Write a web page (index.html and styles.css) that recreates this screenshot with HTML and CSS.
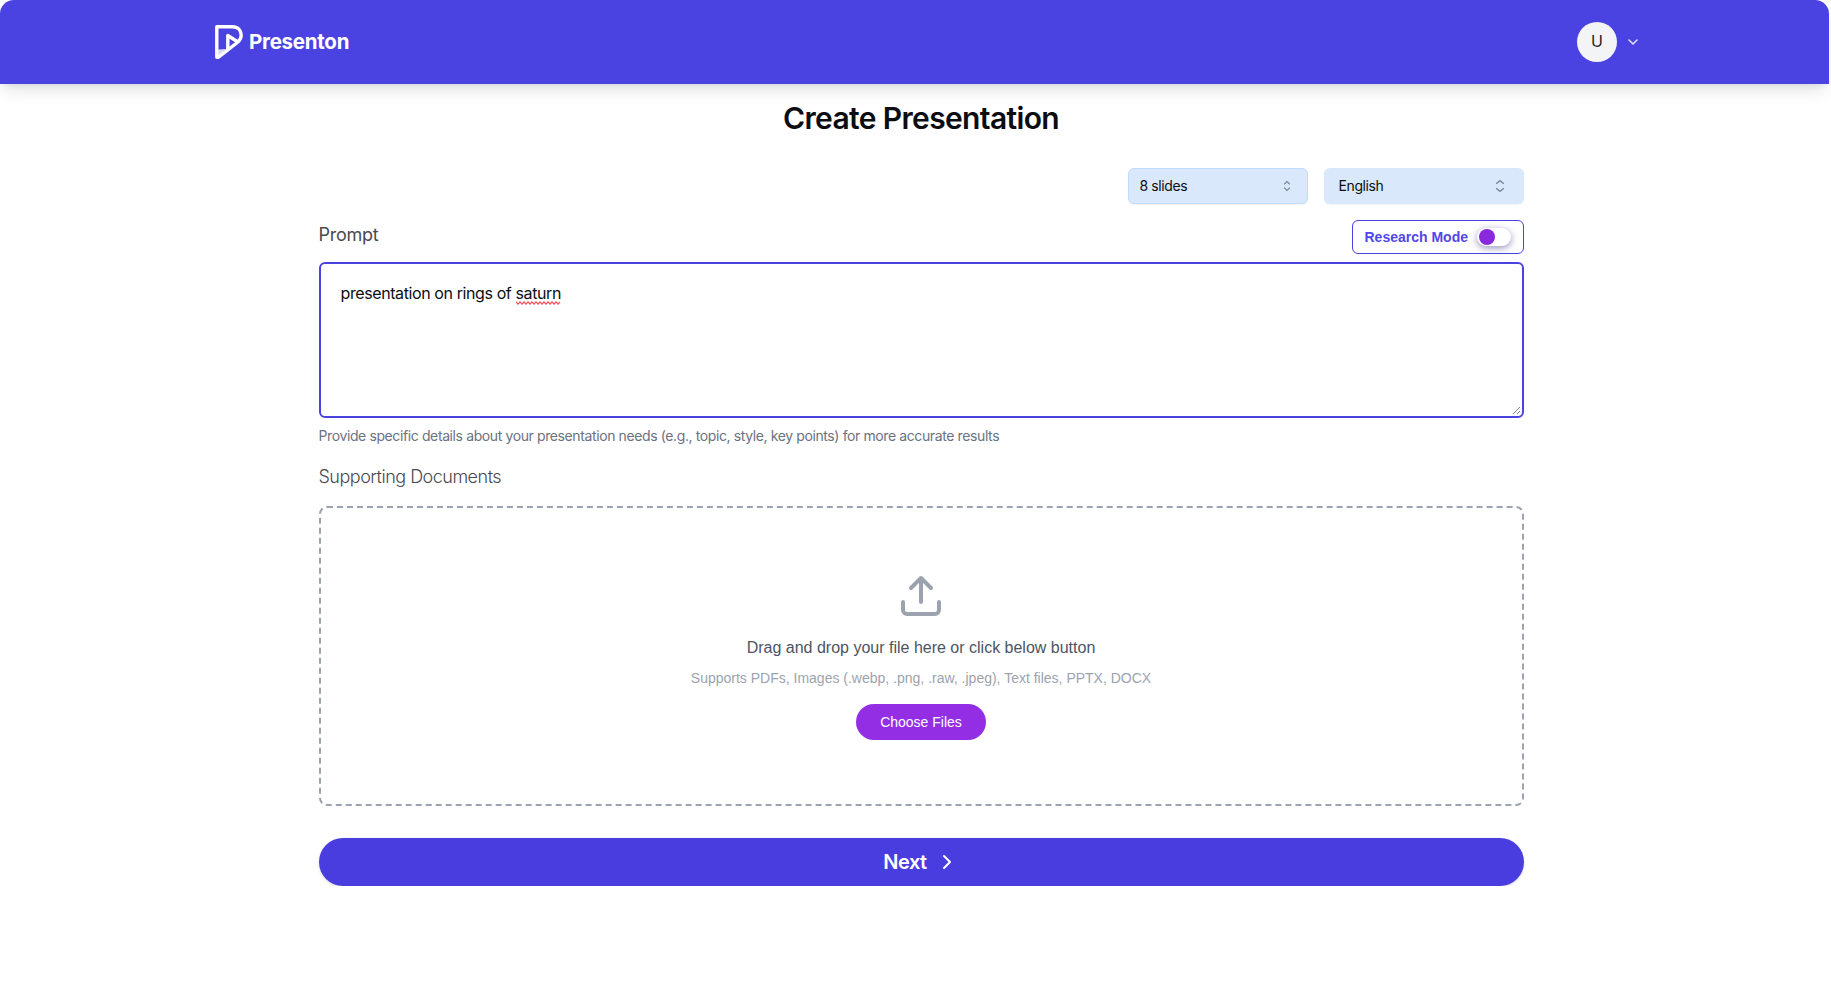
FILE: index.html
```html
<!DOCTYPE html>
<html lang="en">
<head>
<meta charset="utf-8">
<title>Presenton</title>
<link rel="stylesheet" href="styles.css">
</head>
<body>
<header class="header">
  <div class="brand">
    <svg class="logo" width="28" height="34" viewBox="0 0 28 34" fill="none" stroke="#fff" stroke-width="3.4" stroke-linejoin="round"><path d="M3 24.5 11.5 24 3 31Z" fill="#d9d7f8" stroke="none"/><path d="M1.8 1.8H17.5C23 1.8 26.2 5.6 26.2 10.3C26.2 13 25 15 23 17L3.5 32.2H1.8Z"/><path d="M12.8 24V10.5L22.5 16.8"/></svg>
    <span class="brand-name">Presenton</span>
  </div>
  <div class="account">
    <span class="avatar">U</span>
    <svg width="16" height="16" viewBox="0 0 24 24" fill="none" stroke="#e6e5fb" stroke-width="2.2" stroke-linecap="round" stroke-linejoin="round"><path d="m6 9 6 6 6-6"/></svg>
  </div>
</header>
<main class="main">
  <h1 class="title">Create Presentation</h1>
  <div class="selects">
    <button class="select slides"><span>8 slides</span>
      <svg width="8" height="12" viewBox="0 0 8 12" fill="none" stroke="#7c8793" stroke-width="1.2"><path d="M1.2 4.2 4 1.6 6.8 4.2M1.2 7.8 4 10.4 6.8 7.8"/></svg></button>
    <button class="select language"><span>English</span>
      <svg width="10" height="14" viewBox="0 0 10 14" fill="none" stroke="#7c8793" stroke-width="1.4"><path d="M1.2 4.8 5 1.6 8.8 4.8M1.2 9.2 5 12.4 8.8 9.2"/></svg></button>
  </div>
  <div class="prompt-row">
    <label class="label prompt-label">Prompt</label>
    <div class="research"><span>Research Mode</span><span class="switch"><span class="knob"></span></span></div>
  </div>
  <div class="prompt-box">
    <span>presentation on rings of <span class="misspelt">saturn<svg class="squiggle" width="45" height="4" viewBox="0 0 45 4" fill="none" stroke="#ff4c55" stroke-width="1.1"><path d="M0 .8 2 3.2 4 .8 6 3.2 8 .8 10 3.2 12 .8 14 3.2 16 .8 18 3.2 20 .8 22 3.2 24 .8 26 3.2 28 .8 30 3.2 32 .8 34 3.2 36 .8 38 3.2 40 .8 42 3.2 44 .8"/></svg></span></span>
    <svg class="grip" width="9" height="9" viewBox="0 0 9 9" stroke="#858585" stroke-width="1"><path d="M1 8 8 1M5 8 8 5"/></svg>
  </div>
  <p class="help">Provide specific details about your presentation needs (e.g., topic, style, key points) for more accurate results</p>
  <h2 class="label docs-label">Supporting Documents</h2>
  <section class="dropzone">
    <svg width="48" height="48" viewBox="0 0 24 24" fill="none" stroke="#9ca3af" stroke-width="2" stroke-linecap="round" stroke-linejoin="round"><path d="M21 15v4a2 2 0 0 1-2 2H5a2 2 0 0 1-2-2v-4M17 8l-5-5-5 5M12 3v12"/></svg>
    <p class="drop-title">Drag and drop your file here or click below button</p>
    <p class="drop-note">Supports PDFs, Images (.webp, .png, .raw, .jpeg), Text files, PPTX, DOCX</p>
    <button class="choose">Choose Files</button>
  </section>
  <button class="next"><span>Next</span>
    <svg width="24" height="24" viewBox="0 0 24 24" fill="none" stroke="#fff" stroke-width="2" stroke-linecap="round" stroke-linejoin="round"><path d="m9 18 6-6-6-6"/></svg></button>
</main>
</body>
</html>
```
FILE: styles.css
```css
* { box-sizing: border-box; }
body { margin: 0; background: #fff; font-family: Inter, "Liberation Sans", sans-serif; color: #0c0d12; }
button { border: 0; font-family: inherit; color: inherit; }
h1, h2, p { margin: 0; font-weight: 400; }
span { white-space: nowrap; }
svg { flex: none; display: block; }
.header {
  width: 1829px; height: 84px; padding: 0 188px 0 215px;
  display: flex; align-items: center; justify-content: space-between;
  background: #4b43e1; border-radius: 14px 14px 0 0;
  box-shadow: 0 10px 15px -3px rgba(0,0,0,.1), 0 4px 6px -4px rgba(0,0,0,.1);
}
.brand { display: flex; align-items: center; gap: 6px; }
.brand-name { color: #fff; font-size: 20.5px; font-weight: 700; letter-spacing: -.25px; line-height: 24px; }
.account { display: flex; align-items: center; gap: 8px; }
.avatar { width: 40px; height: 40px; border-radius: 50%; background: #f3f4f6; color: #26262b; display: grid; place-items: center; font-size: 16px; padding-bottom: 2px; }
.main { width: 1205px; margin-left: 318.5px; }
.title { height: 84px; padding-top: 14px; line-height: 40px; font-size: 30px; font-weight: 600; text-align: center; letter-spacing: -.63px; }
.selects { display: flex; justify-content: flex-end; gap: 16px; }
.select { height: 36px; display: flex; align-items: center; justify-content: space-between; background: #d9e9fb; border-radius: 6px; font-size: 14px; box-shadow: 0 1px 2px rgba(0,0,0,.05); }
.select span { padding-bottom: 1px; }
.slides { width: 180px; padding: 0 16px 0 11px; border: 1px solid #bfdbfe; letter-spacing: -.4px; }
.language { width: 200px; padding: 0 19px 0 15px; letter-spacing: -.4px; }
.prompt-row { height: 58px; padding-top: 16px; display: flex; justify-content: space-between; align-items: flex-start; }
.label { color: #4a4a4f; font-size: 18px; line-height: 28px; letter-spacing: -.5px; }
.prompt-label { margin-top: 1px; letter-spacing: -.25px; }
.research { width: 172px; height: 34px; display: flex; align-items: center; justify-content: space-between; padding: 0 12px; border: 1px solid #4b43e1; border-radius: 6px; color: #5146e5; font: 700 14px "Liberation Sans", Arial, sans-serif; }
.switch { width: 34px; height: 18px; padding: 1px 2px; border-radius: 9px; background: #fff; box-shadow: 0 2px 7px rgba(50,40,130,.5); }
.knob { display: block; width: 16px; height: 16px; border-radius: 50%; background: #8b27dd; }
.prompt-box { position: relative; height: 156px; padding: 19px 20px; border: 2px solid #4b43e1; border-radius: 6px; font-size: 16px; line-height: 20px; font-weight: 400; letter-spacing: -.4px; }
.misspelt { position: relative; }
.squiggle { position: absolute; left: 0; top: 18px; }
.grip { position: absolute; right: 1px; bottom: 1px; }
.help { margin-top: 8px; height: 20px; font-size: 14px; line-height: 20px; color: #6b7280; letter-spacing: -.39px; }
.docs-label { margin-top: 17px; height: 43px; font-weight: 300; }
.dropzone { height: 300px; border: 2px dashed #9ca3af; border-radius: 8px; padding-top: 64px; display: flex; flex-direction: column; align-items: center; font-family: "Liberation Sans", Arial, sans-serif; }
.drop-title { margin-top: 16px; font-size: 16px; line-height: 24px; color: #4b5563; }
.drop-note { margin-top: 8px; font-size: 14px; line-height: 20px; color: #9ca3af; }
.choose { margin-top: 16px; width: 130px; height: 36px; border-radius: 18px; background: #932ee5; color: #fff; font-size: 14px; }
.next { margin-top: 32px; width: 100%; height: 48px; border-radius: 24px; background: #4a3de0; color: #fff; display: flex; align-items: center; justify-content: center; gap: 8px; font-size: 20px; font-weight: 600; letter-spacing: -.5px; box-shadow: 0 1px 3px rgba(0,0,0,.15); }
```
